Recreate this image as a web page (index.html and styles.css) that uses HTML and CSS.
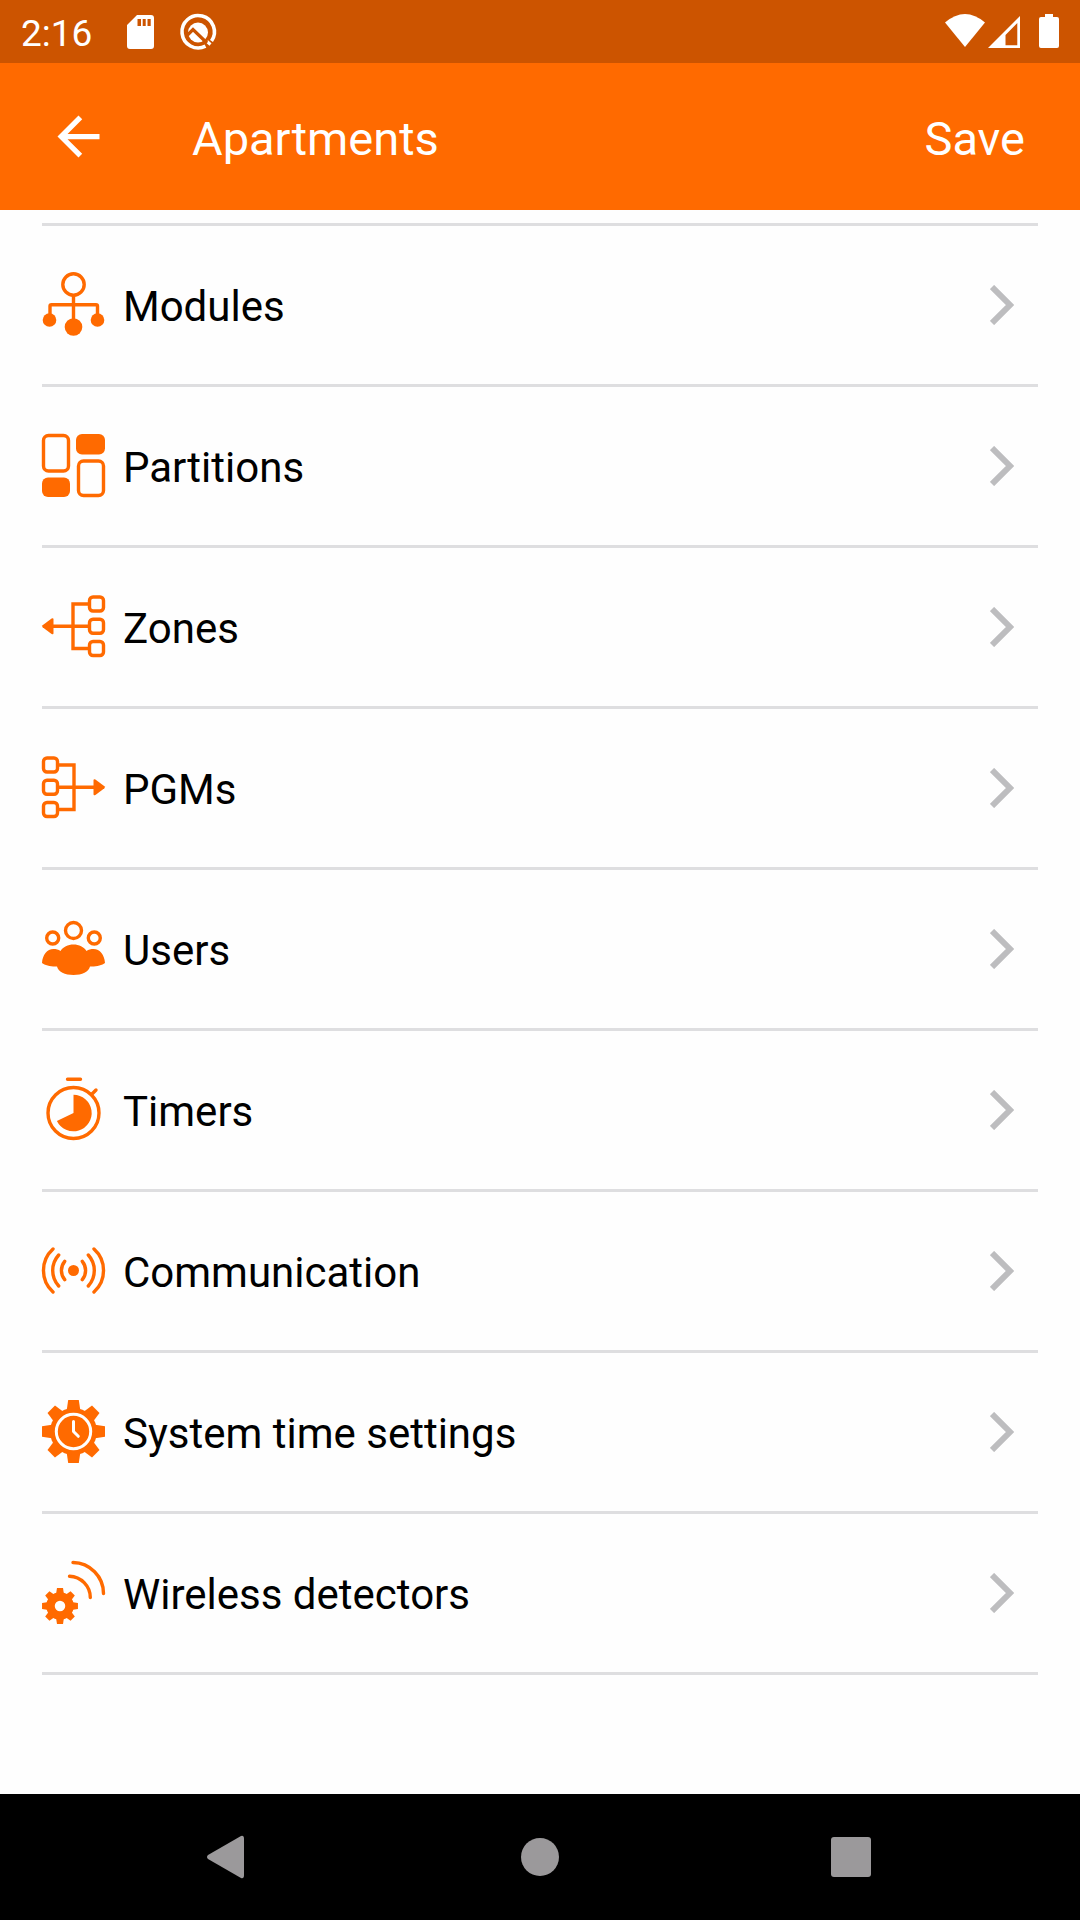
FILE: index.html
```html
<!DOCTYPE html>
<html lang="en">
<head>
<meta charset="utf-8">
<meta name="viewport" content="width=device-width, initial-scale=1">
<title>Apartments</title>
<link rel="stylesheet" href="styles.css">
</head>
<body>
<svg class="defs" aria-hidden="true">
  <defs>
    <path id="tooth" d="M-7 -20L-5.3 -31.5H5.3L7 -20Z"/>
    <g id="gear-teeth">
      <use href="#tooth"/>
      <use href="#tooth" transform="rotate(45)"/>
      <use href="#tooth" transform="rotate(90)"/>
      <use href="#tooth" transform="rotate(135)"/>
      <use href="#tooth" transform="rotate(180)"/>
      <use href="#tooth" transform="rotate(225)"/>
      <use href="#tooth" transform="rotate(270)"/>
      <use href="#tooth" transform="rotate(315)"/>
    </g>
    <g id="tree">
      <g class="line">
        <rect x="47.5" y="2" width="14" height="14" rx="3.5"/>
        <rect x="47.5" y="24.3" width="14" height="14" rx="3.5"/>
        <rect x="47.5" y="46.5" width="14" height="14" rx="3.5"/>
        <path d="M47 9H31V53.500H47M10 31.300H47"/>
      </g>
      <path d="M.6 30.200L9.600 23.500Q11.500 22.600 11.500 24.500V38Q11.500 40 9.600 39L.6 32.300Q-.4 31.300 .6 30.200Z"/>
    </g>
    <symbol id="chevron" viewBox="0 0 24 40"><path d="M2 2L20 20L2 38" fill="none" stroke="#bdbdbf" stroke-width="6"/></symbol>
  </defs>
</svg>

<div class="status">
  <span class="clock">2:16</span>
  <svg class="sd" viewBox="0 0 27 34" aria-hidden="true"><path fill-rule="evenodd" d="M10 0H24Q27 0 27 3V31Q27 34 24 34H3Q0 34 0 31V10ZM10.500 4V11H14V4ZM15.700 4V11H18.700V4ZM20.500 4V11H23.700V4Z"/></svg>
  <svg class="q" viewBox="0 0 36 36" aria-hidden="true">
    <path d="M25.500 32.200A16.200 16.200 0 1 1 31.500 27" fill="none" stroke="#fff" stroke-width="3.600"/>
    <path d="M27 27.500L30.500 30.500" stroke="#fff" stroke-width="3"/>
    <circle cx="18" cy="18.500" r="10"/>
    <path d="M7 21.500L13 15.500L27 29" fill="none" stroke="#cc5400" stroke-width="3.200"/>
  </svg>
  <span class="space"></span>
  <svg class="wifi" viewBox="0 0 40 33" aria-hidden="true"><path d="M0 8.500Q20 -8.500 40 8.500L20 33Z"/></svg>
  <svg class="signal" viewBox="0 0 32 32" aria-hidden="true"><path fill-rule="evenodd" d="M32 0V32H0ZM29.300 7L17.500 19V29.300H29.300Z"/></svg>
  <svg class="battery" viewBox="0 0 20 34" aria-hidden="true"><path d="M6 0H14V3H18Q20 3 20 5V32Q20 34 18 34H2Q0 34 0 32V5Q0 3 2 3H6Z"/></svg>
</div>

<header class="bar">
  <button class="back" type="button" aria-label="Back">
    <svg viewBox="0 0 24 24"><path d="M20 11H7.830l5.590-5.590L12 4l-8 8 8 8 1.410-1.410L7.830 13H20z"/></svg>
  </button>
  <h1 class="title">Apartments</h1>
  <button class="save" type="button">Save</button>
</header>

<main class="content">
  <ul class="menu">
    <li><a class="row" href="#modules">
      <svg class="icon" viewBox="0 0 63 63"><g class="line"><circle cx="31.500" cy="11.500" r="10.700"/><path d="M31.500 23V50M8 46V33Q8 31.700 9.500 31.700H54Q55.500 31.700 55.500 33V46"/></g><circle cx="31.500" cy="54" r="8.800"/><circle cx="7.500" cy="47" r="6.800"/><circle cx="55.500" cy="47" r="6.800"/></svg>
      <span class="label">Modules</span><svg class="chevron"><use href="#chevron"/></svg></a></li>
    <li><a class="row" href="#partitions">
      <svg class="icon" viewBox="0 0 63 63"><g class="line"><rect x="1.500" y="1.500" width="25" height="35.500" rx="5"/><rect x="36.500" y="27" width="25" height="34.500" rx="5"/></g><rect x="34" width="29" height="20.500" rx="6"/><rect y="43.500" width="28" height="19.500" rx="6"/></svg>
      <span class="label">Partitions</span><svg class="chevron"><use href="#chevron"/></svg></a></li>
    <li><a class="row" href="#zones">
      <svg class="icon" viewBox="0 0 63 63"><use href="#tree"/></svg>
      <span class="label">Zones</span><svg class="chevron"><use href="#chevron"/></svg></a></li>
    <li><a class="row" href="#pgms">
      <svg class="icon" viewBox="0 0 63 63"><use href="#tree" transform="matrix(-1 0 0 1 63 0)"/></svg>
      <span class="label">PGMs</span><svg class="chevron"><use href="#chevron"/></svg></a></li>
    <li><a class="row" href="#users">
      <svg class="icon" viewBox="0 0 63 63"><g class="line"><circle cx="31.500" cy="13.500" r="8"/><circle cx="10.700" cy="21" r="6"/><circle cx="52.300" cy="21" r="6"/></g><path d="M18.500 34C21 30 26 27.500 31.500 27.500S42 30 44.500 34C46.500 32.600 49 32 51.500 32C58 32 62.500 38 63 46C60 48.500 54 49.800 48 49.500C47 54.500 40 58 31.500 58S16 54.500 15 49.500C9 49.800 3 48.500 0 46C.5 38 5 32 11.500 32C14 32 16.500 32.600 18.500 34Z"/></svg>
      <span class="label">Users</span><svg class="chevron"><use href="#chevron"/></svg></a></li>
    <li><a class="row" href="#timers">
      <svg class="icon" viewBox="0 0 63 63"><g class="line"><circle cx="31.500" cy="35" r="25.500"/><path d="M25.500 1.200H38.500M49.500 16.500L54 12"/></g><path d="M31.500 35V16.700A18.300 18.300 0 1 1 14.900 43Z"/></svg>
      <span class="label">Timers</span><svg class="chevron"><use href="#chevron"/></svg></a></li>
    <li><a class="row" href="#communication">
      <svg class="icon" viewBox="0 0 63 63"><circle cx="31.500" cy="31.500" r="5.500"/><path class="line" d="M11 10A29 29 0 0 0 11 53M16.700 16A23 23 0 0 0 16.700 47M22.700 22.300A14.500 14.500 0 0 0 22.700 40.700M52 10A29 29 0 0 1 52 53M46.300 16A23 23 0 0 1 46.300 47M40.300 22.300A14.500 14.500 0 0 1 40.300 40.700"/></svg>
      <span class="label">Communication</span><svg class="chevron"><use href="#chevron"/></svg></a></li>
    <li><a class="row" href="#system-time">
      <svg class="icon" viewBox="0 0 63 63"><use href="#gear-teeth" x="31.500" y="31.500"/><circle cx="31.500" cy="31.500" r="23.500"/><g class="cut"><circle cx="31.500" cy="31.500" r="17.200"/><path d="M31.500 21.500V31.500L36.300 36.300"/></g></svg>
      <span class="label">System time settings</span><svg class="chevron"><use href="#chevron"/></svg></a></li>
    <li><a class="row" href="#wireless">
      <svg class="icon" viewBox="0 0 63 63"><use href="#gear-teeth" transform="translate(18 45) scale(.57)"/><circle cx="18" cy="45" r="9.500" fill="none" stroke="#ff6a00" stroke-width="8.500"/><path class="line" d="M31 1.500A31 31 0 0 1 61.500 32.500M27.500 15.200A21.500 21.500 0 0 1 48.300 36.500"/></svg>
      <span class="label">Wireless detectors</span><svg class="chevron"><use href="#chevron"/></svg></a></li>
  </ul>
</main>

<nav class="system">
  <button type="button" aria-label="System back"><svg viewBox="0 0 42 42"><path d="M35 0Q38 -1 38 3V39Q38 43 35 42L2 23Q0 21 2 19Z"/></svg></button>
  <button type="button" aria-label="Home"><svg viewBox="0 0 42 42"><circle cx="21" cy="21" r="19"/></svg></button>
  <button type="button" aria-label="Recent apps"><svg viewBox="0 0 42 42"><rect x="-1" y="1" width="40" height="40" rx="3"/></svg></button>
</nav>
</body>
</html>
```
FILE: styles.css
```css
* {
  box-sizing: border-box;
}

body {
  margin: 0;
  min-height: 100vh;
  display: flex;
  flex-direction: column;
  background: #fefefe;
  color: #000;
  font-family: Roboto, "Liberation Sans", sans-serif;
}

svg {
  display: block;
  flex: none;
  overflow: visible;
}

button {
  margin: 0;
  padding: 0;
  border: 0;
  background: none;
  color: inherit;
  font: inherit;
}

.defs {
  position: absolute;
  width: 0;
  height: 0;
}

.status {
  display: flex;
  align-items: center;
  height: 63px;
  padding: 0 21px;
  background: #cc5400;
  color: #fff;
  fill: #fff;
}

.clock {
  padding-top: 3px;
  font-size: 37px;
}

.sd {
  width: 27px;
  height: 34px;
  margin-left: 35px;
}

.q {
  width: 36px;
  height: 36px;
  margin-left: 26px;
}

.space {
  flex: 1;
}

.wifi {
  width: 40px;
  height: 33px;
  margin-bottom: 2px;
}

.signal {
  width: 32px;
  height: 32px;
  margin-left: 3px;
}

.battery {
  width: 20px;
  height: 34px;
  margin-bottom: 1px;
  margin-left: 19px;
}

.bar {
  display: flex;
  align-items: center;
  height: 147px;
  padding: 0 55px 0 47px;
  background: #ff6a00;
  color: #fff;
  font-size: 47px;
}

.back svg {
  width: 63px;
  height: 63px;
  fill: #fff;
}

.title {
  flex: 1;
  margin: 0;
  padding: 4px 0 0 82px;
  font-size: 47px;
  font-weight: 400;
}

.save {
  padding-top: 4px;
}

.content {
  flex: 1;
  padding: 13px 42px 0;
}

.menu {
  margin: 0;
  padding: 0;
  list-style: none;
  border-top: 3px solid #dedee0;
}

.row {
  display: flex;
  align-items: center;
  gap: 18px;
  height: 161px;
  padding-right: 24px;
  border-bottom: 3px solid #dedee0;
  color: inherit;
  text-decoration: none;
}

.icon {
  width: 63px;
  height: 63px;
  margin-bottom: 2px;
  fill: #ff6a00;
}

.line {
  fill: none;
  stroke: #ff6a00;
  stroke-width: 3.4;
  stroke-linecap: round;
}

.cut {
  fill: none;
  stroke: #fefefe;
  stroke-width: 3;
  stroke-linecap: round;
  stroke-linejoin: round;
}

.label {
  flex: 1;
  padding-top: 3px;
  font-size: 42px;
}

.chevron {
  width: 24px;
  height: 40px;
}

.system {
  display: flex;
  height: 126px;
  padding: 0 70px;
  background: #000;
}

.system button {
  flex: 1;
  display: flex;
  align-items: center;
  justify-content: center;
}

.system svg {
  width: 42px;
  height: 42px;
  fill: #9b999b;
}
```
